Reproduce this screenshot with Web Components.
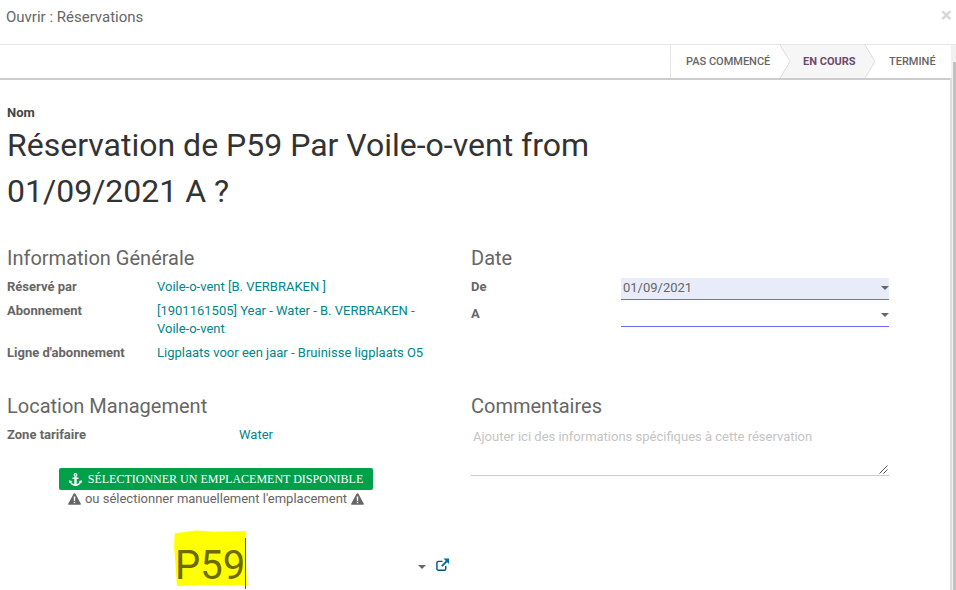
<!DOCTYPE html>
<html><head><meta charset="utf-8"><style>
html,body{margin:0;padding:0;background:#fff;overflow:hidden}
body{width:956px;height:590px;font:13px/18px Roboto,"Noto Sans",sans-serif;color:#666}
</style></head><body>
<res-dialog></res-dialog>
<script>
function def(name,html){customElements.define(name,class extends HTMLElement{constructor(){super();this.attachShadow({mode:'open'}).innerHTML=html}})}
const caret='<svg width="8" height="4" viewBox="0 0 8 4" style="display:block"><path d="M0 0h8L4 4z" fill="#666"/></svg>';
const warn='<svg width="13" height="12" viewBox="0 0 13 12" style="display:block"><path d="M6.500.3c.4 0 .7.2.9.5l5.300 9.600c.4.7-.1 1.400-.9 1.400H1.200C.4 11.800-.1 11.100.3 10.400L5.600.8c.2-.3.5-.5.9-.5z" fill="#666"/><path d="M5.700 3.600h1.600l-.2 4.300H5.900zM5.800 8.800h1.400v1.400H5.800z" fill="#fff"/></svg>';
def('res-field',`<style>:host{display:grid;grid-template-columns:150px 1fr;align-items:start}
.l{font-weight:700;font-size:13px}</style><div class="l"><slot name="label"></slot></div><div><slot></slot></div>`);
def('date-input',`<style>:host{display:flex;align-items:center;justify-content:space-between;box-sizing:border-box;height:22px;border-bottom:1px solid #6a6af5;padding:0 0 2px 2px;font-size:13px}
:host([filled]){background:#e8ecf8}</style><span><slot></slot></span><span style="padding-top:1px">${caret}</span>`);
def('res-status',`<style>:host{display:flex;justify-content:flex-end;box-sizing:border-box;height:35px;border-bottom:2px solid #ccc;padding-right:6px;font-size:11px;font-weight:500;color:#666;white-space:nowrap}
.b{display:flex;align-items:center;height:33px;position:relative;box-sizing:border-box}
.first{border-left:1px solid #e4e4e4;padding-left:15px;width:110px}
.cur{background:#f6f6f6;width:85px;padding-left:23px;color:#6d4a6c;font-weight:700}
.last{width:85px;padding-left:24px}
svg{position:absolute;left:0;top:0;height:33px;width:11px}
</style><div class="b first">PAS COMMENCÉ</div><div class="b cur"><svg viewBox="0 0 11 33"><path d="M0 0l10 16.500L0 33z" fill="#fff"/><path d="M0 0l10 16.500L0 33" fill="none" stroke="#ddd"/></svg>EN COURS</div><div class="b last"><svg viewBox="0 0 11 33"><path d="M0 0l10 16.500L0 33z" fill="#f6f6f6"/><path d="M0 0l10 16.500L0 33" fill="none" stroke="#ddd"/></svg>TERMINÉ</div>`);
def('res-dialog',`<style>:host{display:block;position:relative;width:956px;height:590px;overflow:hidden}
header{display:flex;justify-content:space-between;box-sizing:border-box;height:45px;border-bottom:1px solid #e5e5e5;padding:7px 4px 0 6px;font-size:15px;line-height:20px}
.x{font-size:21px;font-weight:700;color:#d8d8d8;line-height:16px}
main{padding:24px 7px 0 7px}
.nom{font-weight:700;font-size:13px;line-height:18px;color:#444}
h1{margin:0;width:620px;font-weight:400;font-size:32px;line-height:46px;color:#333}
.cols{display:grid;grid-template-columns:464px 418px;margin-top:31px}
h2{margin:0;font-weight:400;font-size:20px;line-height:27px;color:#666}
a{color:#00868b;text-decoration:none}
.rows{display:flex;flex-direction:column;gap:6px;margin-top:6px;width:424px}
.btnwrap{display:flex;flex-direction:column;align-items:center;width:418px;margin-top:24px}
.btn{display:flex;align-items:center;gap:6px;justify-content:center;width:314px;height:22px;background:#00a04a;border-radius:2px;color:#fff;font:12px "Liberation Serif",serif}
.warnline{display:flex;align-items:center;gap:4px;line-height:18px}
.p59{display:flex;align-items:center;width:442px;margin-top:22px}
.hl{position:relative;margin-left:167px;width:73px;height:56px;flex:none;color:#6b6b00;font-size:40px;line-height:71px;padding-left:1px;box-sizing:border-box}
.hl::before{content:"";position:absolute;z-index:-1;inset:0;background:#ff0;clip-path:polygon(1% 6%,30% 1%,55% 3%,99% 2%,98% 40%,100% 99%,40% 98%,4% 100%,2% 60%,0 30%)}
.hl span{position:relative}
.hl::after{content:"";position:absolute;left:71px;top:8px;height:51px;width:1px;background:#555}
.holder{position:relative;z-index:0;display:flex}
.ph{color:#c4c4c4;margin-top:7px;padding:0 2px;box-sizing:border-box;height:49px;border-bottom:1px solid #ccc;position:relative;line-height:19px}
.grip{position:absolute;right:1px;bottom:1px}
.track{position:absolute;right:0;top:45px;bottom:0;width:5px;background:#f1f1f1}
.sb{position:absolute;right:0;top:62px;bottom:0;width:3px;background:#c1c1c1}
.vl{position:absolute;right:4px;top:78px;bottom:0;width:2px;background:#ddd}
</style>
<header><span>Ouvrir : Réservations</span><span class="x">×</span></header>
<res-status></res-status>
<main>
<div class="nom">Nom</div>
<h1>Réservation de P59 Par Voile-o-vent from 01/09/2021 A ?</h1>
<div class="cols">
 <section>
  <h2>Information Générale</h2>
  <div class="rows">
   <res-field><span slot="label">Réservé par</span><a>Voile-o-vent [B. VERBRAKEN ]</a></res-field>
   <res-field><span slot="label">Abonnement</span><a>[1901161505] Year - Water - B. VERBRAKEN - Voile-o-vent</a></res-field>
   <res-field><span slot="label">Ligne d'abonnement</span><a>Ligplaats voor een jaar - Bruinisse ligplaats O5</a></res-field>
  </div>
 </section>
 <section>
  <h2>Date</h2>
  <div style="display:flex;flex-direction:column;gap:5px;margin-top:6px">
   <res-field><span slot="label">De</span><date-input filled>01/09/2021</date-input></res-field>
   <res-field><span slot="label">A</span><date-input></date-input></res-field>
  </div>
 </section>
 <section style="margin-top:31px">
  <h2>Location Management</h2>
  <div class="rows"><res-field><span slot="label">Zone tarifaire</span><a style="margin-left:82px">Water</a></res-field></div>
  <div class="btnwrap"><div class="btn"><svg width="13" height="13" viewBox="0 0 13 13"><path d="M6.500 0a1.900 1.900 0 0 1 1 3.500V4.500H9.500v1.600H7.700v5c1.300-.2 2.400-.9 2.900-1.800l-1-.6L12.600 7l.4 3.200-1-.6c-1 2-3.200 3.400-5.500 3.400S2 11.600 1 9.600L0 10.200.4 7l3 1.700-1 .6c.5.9 1.600 1.600 2.900 1.800v-5H3.500V4.500H5.500V3.500A1.900 1.900 0 0 1 6.500 0zm0 1.200a.7.7 0 1 0 0 1.400.7.7 0 0 0 0-1.400z" fill="#fff"/></svg>SÉLECTIONNER UN EMPLACEMENT DISPONIBLE</div>
  <div class="warnline">${warn}<span>ou sélectionner manuellement l'emplacement</span>${warn}</div></div>
  <div class="p59"><div class="holder"><div class="hl"><span>P59</span></div></div><span style="margin-left:171px;padding-top:18px">${caret}</span><svg style="margin-left:10px;margin-top:13px" width="14" height="14" viewBox="0 0 14 14"><path d="M10.500 8v3a1.700 1.700 0 0 1-1.700 1.700H2.700A1.700 1.700 0 0 1 1 11V4.800A1.700 1.700 0 0 1 2.700 3.100H7" fill="none" stroke="#00507a" stroke-width="1.500"/><path d="M8 0h6v6L12 4 7 9 5.500 7.500l5-5z" fill="#0070a8"/></svg></div>
 </section>
 <section style="margin-top:31px">
  <h2>Commentaires</h2>
  <div class="ph">Ajouter ici des informations spécifiques à cette réservation
   <svg class="grip" width="9" height="9" viewBox="0 0 9 9"><path d="M8.500 .5L.5 8.500M8.500 4.500L4.500 8.500" stroke="#555" stroke-width="1"/></svg></div>
 </section>
</div>
</main>
<div class="track"></div><div class="vl"></div><div class="sb"></div>`);
</script></body></html>
